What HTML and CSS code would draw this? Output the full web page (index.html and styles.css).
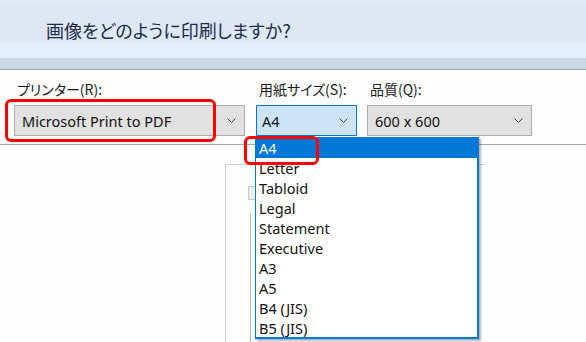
FILE: index.html
```html
<!DOCTYPE html>
<html lang="ja">
<head>
    <meta charset="UTF-8">
    <title>画像の印刷</title>
    <link rel="stylesheet" href="styles.css">
</head>
<body>
    <div class="header">
        <h1>画像をどのように印刷しますか?</h1>
    </div>
    <div class="header-strip"></div>

    <div class="fields">
        <div class="field printer">
            <label>プリンター(R):</label>
            <div class="combo">
                <span>Microsoft Print to PDF</span>
                <svg class="chevron" viewBox="0 0 9 5" width="9" height="5"><path d="M0.5 0.5 L4.5 4.5 L8.5 0.5" fill="none" stroke="#444" stroke-width="1"/></svg>
            </div>
        </div>
        <div class="field paper">
            <label>用紙サイズ(S):</label>
            <div class="combo active">
                <span>A4</span>
                <svg class="chevron" viewBox="0 0 9 5" width="9" height="5"><path d="M0.5 0.5 L4.5 4.5 L8.5 0.5" fill="none" stroke="#444" stroke-width="1"/></svg>
            </div>
        </div>
        <div class="field quality">
            <label>品質(Q):</label>
            <div class="combo">
                <span>600 x 600</span>
                <svg class="chevron" viewBox="0 0 9 5" width="9" height="5"><path d="M0.5 0.5 L4.5 4.5 L8.5 0.5" fill="none" stroke="#444" stroke-width="1"/></svg>
            </div>
        </div>
    </div>

    <div class="preview">
        <div class="page-frame">
            <div class="page-thumb"></div>
            <div class="page-inner"></div>
        </div>
    </div>

    <ul class="dropdown">
        <li class="selected">A4</li>
        <li>Letter</li>
        <li>Tabloid</li>
        <li>Legal</li>
        <li>Statement</li>
        <li>Executive</li>
        <li>A3</li>
        <li>A5</li>
        <li>B4 (JIS)</li>
        <li>B5 (JIS)</li>
    </ul>

    <!-- annotation marks -->
    <div class="mark mark-printer"></div>
    <div class="mark mark-a4"></div>
</body>
</html>
```

FILE: styles.css
```css
* {
    margin: 0;
    padding: 0;
    box-sizing: border-box;
}

body {
    font-family: "Noto Sans", "Noto Sans CJK JP", sans-serif;
    background: #fdfdfd;
    color: #000;
    width: 586px;
    height: 342px;
    overflow: hidden;
    position: relative;
}

.header {
    height: 58px;
    background: linear-gradient(#e2eaf5 0, #e2eaf5 5px, #dde8f4 5px, #dde8f4 42px, #e5eef8 42px);
    padding: 18px 0 0 46px;
}

.header h1 {
    font-family: "Noto Sans CJK JP", sans-serif;
    font-feature-settings: "palt";
    font-size: 18px;
    font-weight: 400;
    color: #1b2d4b;
    line-height: 24px;
}

.header-strip {
    height: 12px;
    background: #cbd8e8;
    border-bottom: 1px solid #a6a6a6;
}

.fields {
    display: flex;
    padding: 9px 0 0 14px;
    height: 75px;
    border-bottom: 1px solid #a6a6a6;
}

.field label {
    display: block;
    font-family: "Noto Sans CJK JP", sans-serif;
    font-feature-settings: "palt";
    font-size: 14px;
    line-height: 20px;
    color: #1a1a1a;
    margin: 0 0 6px 3px;
}

.printer { width: 231px; margin-right: 11px; }
.paper { width: 101px; margin-right: 10px; }
.quality { width: 165px; }

.combo {
    height: 31px;
    background: #e1e1e1;
    border: 1px solid #adadad;
    display: flex;
    align-items: center;
    justify-content: space-between;
    padding: 0 8px 0 7px;
    font-size: 14.5px;
    color: #111;
}

.combo.active {
    background: #cce4f7;
    border-color: #0078d7;
    padding-left: 5px;
}

.chevron {
    flex-shrink: 0;
}

.preview {
    height: 197px;
    padding: 19px 0 0 225px;
}

.page-frame {
    width: 260px;
    height: 190px;
    border: 1px solid #cfcfcf;
    border-right: none;
    border-bottom: none;
    padding: 21px 0 0 22px;
}

.page-thumb {
    width: 8px;
    height: 14px;
    border: 1px solid #c8c8c8;
    background: #eee;
}

.page-inner {
    margin: 14px 0 0 2px;
    height: 140px;
    border-left: 1px solid #b8b8b8;
}

.dropdown {
    position: absolute;
    left: 255px;
    top: 137px;
    width: 224px;
    height: 202px;
    list-style: none;
    background: #fff;
    border: 1px solid #0078d7;
    border-right-width: 2px;
    border-bottom-width: 2px;
    box-shadow: 2px 2px 2px rgba(0, 0, 0, 0.3);
}

.dropdown li {
    height: 20px;
    line-height: 20px;
    padding-left: 3px;
    font-size: 14.5px;
    color: #111;
}

.dropdown li.selected {
    background: #0078d7;
    color: #fff;
}

.mark {
    position: absolute;
    border: 3px solid #ff0000;
    border-radius: 6px;
}

.mark-printer {
    left: 5px;
    top: 99px;
    width: 211px;
    height: 43px;
}

.mark-a4 {
    left: 244px;
    top: 136px;
    width: 75px;
    height: 29px;
}
```
